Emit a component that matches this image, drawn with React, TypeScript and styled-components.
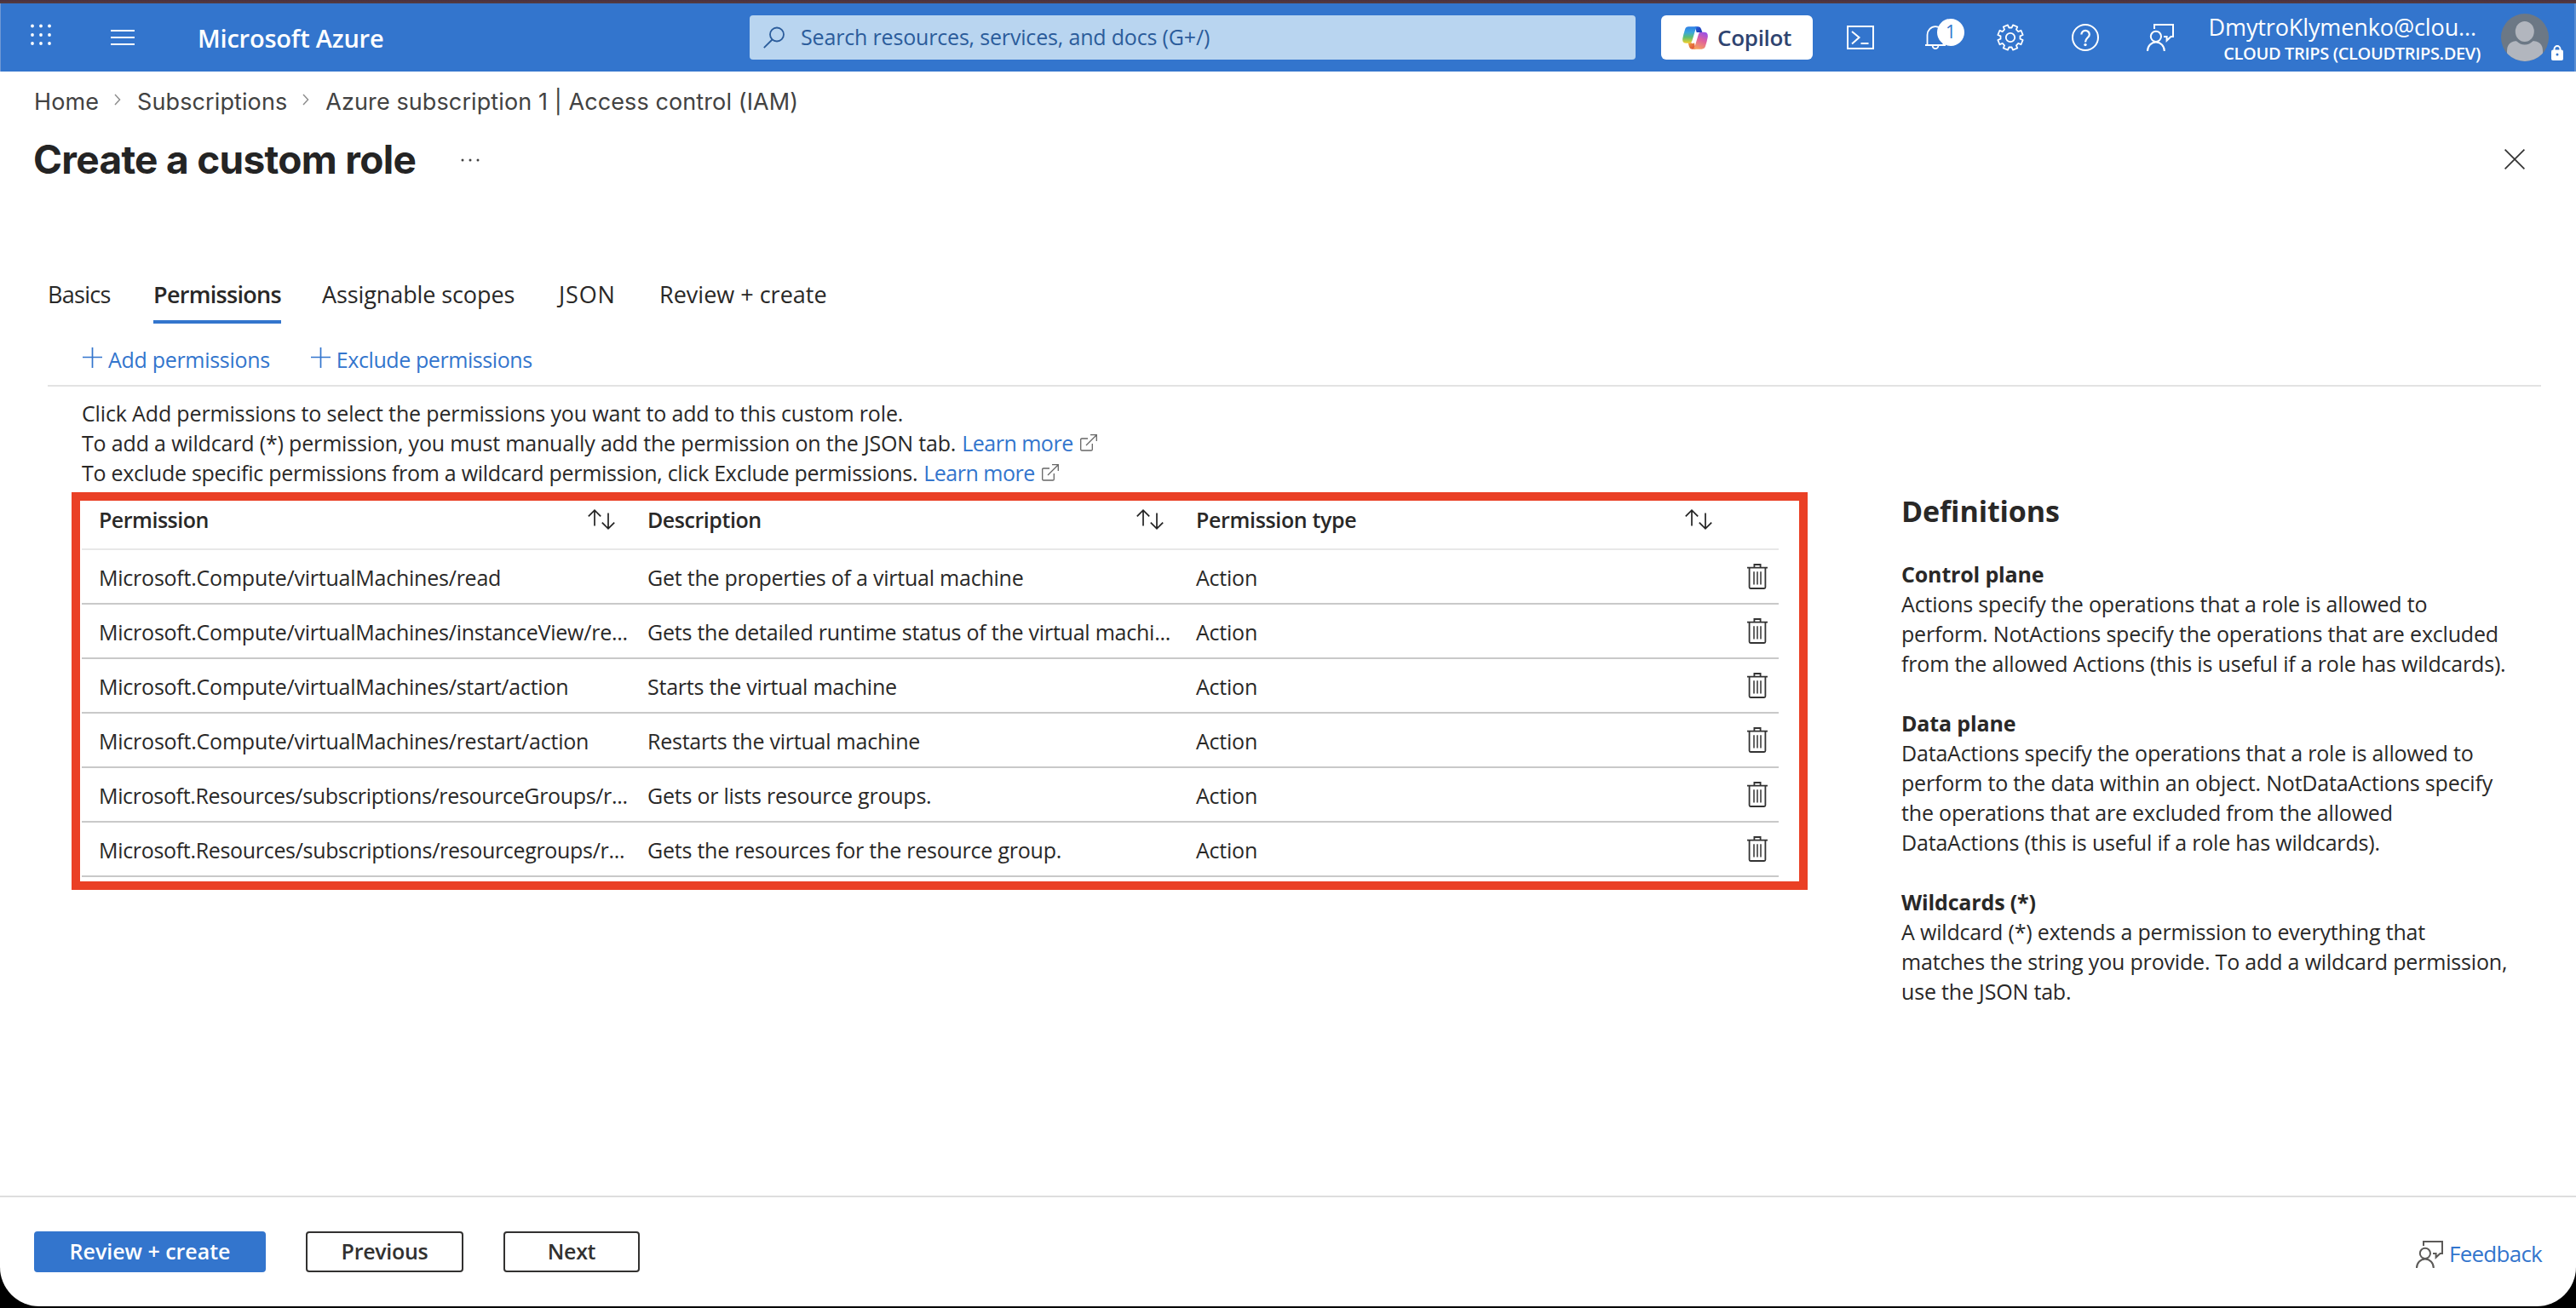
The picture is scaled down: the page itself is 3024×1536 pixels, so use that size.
import React from "react";
import styled, { createGlobalStyle } from "styled-components";

const colors = {
  brand: "#3375cd",
  text: "#292827",
  link: "#3375cd",
  highlight: "#ea4025",
};

const GlobalStyle = createGlobalStyle`
  * { box-sizing: border-box; }
  html, body { margin: 0; padding: 0; background: #000; }
  body {
    font-family: "Open Sans", "Noto Sans", sans-serif;
    font-size: 25px;
    color: ${colors.text};
  }
  svg { display: block; flex: none; }
  button { font-family: inherit; margin: 0; }
`;

const Window = styled.div`
  width: 3024px;
  height: 1534px;
  display: flex;
  flex-direction: column;
  background: #fff;
  border-radius: 0 0 46px 46px;
  overflow: hidden;
`;

/* ---------- top bar ---------- */

const Strip = styled.div`
  height: 4px;
  flex: none;
  background: linear-gradient(#4a3140, #553c41);
`;

const TopBar = styled.header`
  flex: none;
  height: 80px;
  display: grid;
  grid-template-columns: 880px 1040px 1fr;
  align-items: center;
  background: ${colors.brand};
  box-shadow: inset 2px 0 0 -1px #6f98d4, inset -2px 0 0 #5a8ed3;
  color: #fff;
`;

const BarStart = styled.div`
  display: flex;
  align-items: center;
  padding-left: 36px;
`;

const WaffleSlot = styled.div`
  width: 94px;
  padding-bottom: 6px;
`;

const MenuSlot = styled.div`
  width: 102px;
`;

const Brand = styled.div`
  font-size: 29px;
  font-weight: 600;
  letter-spacing: -0.2px;
  line-height: 40px;
  padding-top: 1px;
`;

const Search = styled.div`
  height: 52px;
  display: flex;
  align-items: center;
  gap: 19px;
  padding-left: 16px;
  border-radius: 4px;
  background: #b9d5f0;
  color: #2b5c9b;
`;

const SearchText = styled.span`
  line-height: 36px;
  letter-spacing: -0.17px;
  padding-bottom: 2px;
`;

const BarEnd = styled.div`
  display: flex;
  align-items: center;
  padding-left: 30px;
`;

const CopilotButton = styled.button`
  width: 178px;
  height: 52px;
  margin-right: 12px;
  display: flex;
  align-items: center;
  gap: 11px;
  padding: 0 0 0 25px;
  border: 0;
  border-radius: 6px;
  background: #fff;
  color: #2f4470;
  font-size: 26px;
  font-weight: 600;
  letter-spacing: -0.3px;
  line-height: 36px;
`;

const BarIcon = styled.div`
  position: relative;
  width: 88px;
  height: 80px;
  display: flex;
  align-items: center;
  justify-content: center;
`;

const Badge = styled.span`
  position: absolute;
  left: 46px;
  top: 18px;
  width: 32px;
  height: 32px;
  border-radius: 50%;
  background: #fff;
  color: ${colors.brand};
  font-size: 21px;
  line-height: 30px;
  text-align: center;
`;

const Account = styled.div`
  width: 332px;
  display: flex;
  flex-direction: column;
  align-items: flex-end;
  padding-top: 4px;
  white-space: nowrap;
`;

const AccountName = styled.div`
  font-size: 27px;
  line-height: 34px;
  letter-spacing: -0.12px;
  padding-right: 5px;
`;

const AccountDirectory = styled.div`
  font-size: 20px;
  font-weight: 600;
  line-height: 28px;
  letter-spacing: -0.34px;
`;

const AvatarSlot = styled.div`
  display: flex;
  align-items: center;
  gap: 3px;
  margin-left: 24px;
`;

const LockSlot = styled.div`
  padding-top: 36px;
`;

/* ---------- page heading ---------- */

const Crumbs = styled.nav`
  flex: none;
  display: flex;
  align-items: center;
  height: 36px;
  margin: 18px 0 0 40px;
  font-family: Inter, sans-serif;
  font-size: 27px;
  line-height: 36px;
  letter-spacing: 0.1px;
  color: #424242;
  white-space: nowrap;
`;

const CrumbSeparator = styled.span`
  padding: 0 19px 6px 18px;
`;

const TitleRow = styled.div`
  flex: none;
  display: flex;
  align-items: center;
  height: 60px;
  margin-top: 19px;
  padding: 0 60px 0 39px;
`;

const Title = styled.h1`
  margin: 0;
  font-family: Inter, sans-serif;
  font-size: 46px;
  font-weight: 700;
  letter-spacing: -0.7px;
  line-height: 60px;
  color: #242424;
`;

const MoreSlot = styled.div`
  flex: 1;
  padding: 2px 0 0 53px;
`;

/* ---------- tabs and commands ---------- */

const Tabs = styled.div`
  flex: none;
  display: flex;
  gap: 48px;
  margin: 111px 0 0 56px;
`;

const Tab = styled.div<{ $width: number; $spacing: number; $active?: boolean }>`
  width: ${(p) => p.$width}px;
  height: 52px;
  font-size: 27px;
  line-height: 36px;
  font-weight: ${(p) => (p.$active ? 600 : 400)};
  letter-spacing: ${(p) => p.$spacing}px;
  white-space: nowrap;
  border-bottom: 4px solid ${(p) => (p.$active ? colors.brand : "transparent")};
`;

const CommandBar = styled.div`
  flex: none;
  display: flex;
  gap: 48px;
  height: 74px;
  margin: 0 41px 0 56px;
  padding: 24px 0 0 41px;
  border-bottom: 2px solid #e3e3e3;
  color: ${colors.link};
`;

const Command = styled.div<{ $spacing: number }>`
  display: flex;
  gap: 7px;
  height: 36px;
  line-height: 36px;
  letter-spacing: ${(p) => p.$spacing}px;

  svg { margin-top: 4px; }
`;

/* ---------- content ---------- */

const Intro = styled.div`
  flex: none;
  margin: 14px 0 0 96px;
`;

const IntroLine = styled.div<{ $spacing: number }>`
  display: flex;
  height: 35px;
  line-height: 35px;
  letter-spacing: ${(p) => p.$spacing}px;
  white-space: nowrap;
`;

const LearnMore = styled.a`
  display: flex;
  gap: 8px;
  margin-left: 7px;
  color: ${colors.link};
  letter-spacing: -0.5px;

  svg { margin-top: 7px; }
`;

const Content = styled.main`
  flex: 1;
  min-height: 0;
  display: flex;
  align-items: flex-start;
  margin: 5px 0 0 84px;
`;

const Highlight = styled.section`
  width: 2038px;
  height: 467px;
  padding: 0 24px 0 2px;
  border: 10px solid ${colors.highlight};
`;

const rowColumns = "644px 644px 1fr";

const TableHead = styled.div`
  display: grid;
  grid-template-columns: ${rowColumns};
  height: 58px;
  padding: 0 0 0 20px;
  border-bottom: 2px solid #e8e8e8;
`;

const HeadCell = styled.div<{ $spacing: number }>`
  width: 644px;
  height: 43px;
  display: flex;
  align-items: center;
  justify-content: space-between;
  padding-right: 38px;
  font-weight: 600;
  letter-spacing: ${(p) => p.$spacing}px;
`;

const TableRow = styled.div`
  display: grid;
  grid-template-columns: ${rowColumns} auto;
  align-items: center;
  height: 64px;
  padding: 0 13px 0 20px;
  border-bottom: 2px solid #c9c9c9;
`;

const Cell = styled.div<{ $spacing?: number }>`
  padding-top: 1px;
  line-height: 36px;
  letter-spacing: ${(p) => p.$spacing ?? -0.23}px;
  white-space: nowrap;
`;

const Definitions = styled.aside`
  margin-left: 110px;
  white-space: nowrap;
`;

const DefinitionsTitle = styled.h2`
  margin: 0;
  font-size: 34px;
  font-weight: 700;
  letter-spacing: -0.1px;
  line-height: 44px;
`;

const Definition = styled.section`
  margin-top: 35px;
  line-height: 35px;
  letter-spacing: -0.18px;
`;

const DefinitionTerm = styled.h3`
  margin: 0;
  font-size: 25px;
  font-weight: 700;
  letter-spacing: -0.15px;
`;

/* ---------- footer ---------- */

const Footer = styled.footer`
  flex: none;
  display: flex;
  height: 130px;
  padding: 40px 40px 0;
  border-top: 2px solid #dedede;
`;

const FooterButton = styled.button<{ $width: number; $gap?: number; $primary?: boolean }>`
  width: ${(p) => p.$width}px;
  height: 48px;
  margin-right: ${(p) => p.$gap ?? 0}px;
  padding: 0 0 3px;
  border: 2px solid ${(p) => (p.$primary ? colors.brand : "#323130")};
  border-radius: 4px;
  background: ${(p) => (p.$primary ? colors.brand : "#fff")};
  color: ${(p) => (p.$primary ? "#fff" : "#323130")};
  font-size: 25px;
  font-weight: 600;
  letter-spacing: ${(p) => (p.$primary ? -0.02 : -0.3)}px;
  line-height: 36px;
`;

const Feedback = styled.a`
  display: flex;
  gap: 7px;
  height: 36px;
  margin: 8px 0 0 auto;
  color: ${colors.link};
  font-size: 26px;
  line-height: 36px;
  letter-spacing: -0.75px;

  svg { margin-top: 3px; color: #5c5a58; }
`;

/* ---------- icons ---------- */

const WaffleIcon = () => (
  <svg width="24" height="26" viewBox="0 0 24 26" fill="#fff">
    {[2, 12, 22].map((x) =>
      [2.5, 13, 23].map((y) => <circle key={`${x}-${y}`} cx={x} cy={y} r="1.9" />)
    )}
  </svg>
);

const MenuIcon = () => (
  <svg width="28" height="20" viewBox="0 0 28 20" fill="#fff">
    <rect y="1" width="28" height="2" />
    <rect y="9" width="28" height="2" />
    <rect y="17" width="28" height="2" />
  </svg>
);

const SearchIcon = () => (
  <svg width="25" height="26" viewBox="0 0 25 26" fill="none" stroke="#2b5c9b" strokeWidth="1.8">
    <circle cx="16" cy="9.5" r="8" />
    <path d="M10.5 15.5 L0.8 25.2" />
  </svg>
);

const CopilotIcon = () => (
  <svg width="30" height="27" viewBox="0 0 90 81">
    <defs>
      <linearGradient id="cpLeft" x1="0" y1="0" x2="0" y2="1">
        <stop offset="0" stopColor="#2f7fe6" />
        <stop offset="0.35" stopColor="#3aa6dc" />
        <stop offset="0.65" stopColor="#5fbf6e" />
        <stop offset="1" stopColor="#f3d02c" />
      </linearGradient>
      <linearGradient id="cpRight" x1="0.7" y1="0" x2="0.3" y2="1">
        <stop offset="0" stopColor="#9a52e6" />
        <stop offset="0.45" stopColor="#e0609c" />
        <stop offset="1" stopColor="#f7a45c" />
      </linearGradient>
      <linearGradient id="cpTip" x1="0" y1="0" x2="1" y2="1">
        <stop offset="0" stopColor="#2a62dc" />
        <stop offset="1" stopColor="#1a35ae" />
      </linearGradient>
      <linearGradient id="cpTail" x1="0" y1="0" x2="1" y2="1">
        <stop offset="0" stopColor="#f0a23c" />
        <stop offset="1" stopColor="#d9413c" />
      </linearGradient>
    </defs>
    <path d="M44 1 H56 Q64 1 66 9 L70 21 H50 Z" fill="url(#cpTip)" />
    <path d="M46 80 H34 Q26 80 24 72 L20 58 H42 Z" fill="url(#cpTail)" />
    <path d="M22 1 H56 Q49 2 46 11 L34 51 Q32 59 24 59 H14 Q-2 59 1 42 Q4 26 9 11 Q12 1 22 1 Z" fill="url(#cpLeft)" />
    <path d="M68 80 H34 Q41 79 44 70 L56 30 Q58 20 66 20 H76 Q92 20 89 39 Q86 55 81 70 Q78 80 68 80 Z" fill="url(#cpRight)" />
    <path d="M45 21 H56 Q52 24 51 29 L44 54 Q43 59 37 60 H31 Q36 57 37 52 Z" fill="#fff" />
  </svg>
);

const ShellIcon = () => (
  <svg width="32" height="28" viewBox="0 0 32 28" fill="none" stroke="#fff" strokeWidth="2">
    <rect x="1" y="1" width="30" height="26" />
    <path d="M6 7 L14.5 14 L6 21.5 M16.5 21 H25.5" />
  </svg>
);

const BellIcon = () => (
  <svg width="26" height="28" viewBox="0 0 26 28" fill="none" stroke="#fff" strokeWidth="1.8">
    <path d="M1 23 H25 M3.5 23 V11 A9.5 9.8 0 0 1 22.5 11 V23" />
    <path d="M9.6 23.5 A3.4 3.6 0 0 0 16.4 23.5" />
  </svg>
);

const gearPath = (() => {
  const points: string[] = [];
  for (let tooth = 0; tooth < 8; tooth += 1) {
    const mid = (tooth * Math.PI) / 4 + Math.PI / 8;
    const corners: [number, number][] = [
      [-0.25, 11.6],
      [-0.19, 15],
      [0.19, 15],
      [0.25, 11.6],
    ];
    corners.forEach(([offset, radius]) => {
      const x = 16 + radius * Math.cos(mid + offset);
      const y = 16 + radius * Math.sin(mid + offset);
      points.push(`${x.toFixed(2)} ${y.toFixed(2)}`);
    });
  }
  return `M${points.join(" L")} Z`;
})();

const GearIcon = () => (
  <svg width="32" height="32" viewBox="0 0 32 32" fill="none" stroke="#fff" strokeWidth="1.8" strokeLinejoin="round">
    <path d={gearPath} />
    <circle cx="16" cy="16" r="5.2" />
  </svg>
);

const HelpIcon = () => (
  <svg width="32" height="32" viewBox="0 0 32 32" fill="none" stroke="#fff" strokeWidth="2">
    <circle cx="16" cy="16" r="15" />
    <path d="M11.4 12.6 A4.7 4.7 0 0 1 20.8 12.4 C20.8 16.2 16 16.4 16 21.4" strokeWidth="2.2" />
    <circle cx="16" cy="24.6" r="1.7" fill="#fff" stroke="none" />
  </svg>
);

const PersonFeedbackIcon = () => (
  <svg width="32" height="32" viewBox="0 0 32 32" fill="none" stroke="currentColor" strokeWidth="2">
    <circle cx="10.9" cy="14.8" r="6.1" />
    <path d="M1 32 A9.9 10.6 0 0 1 20.8 32" />
    <path d="M9 6 V1 H31 V15 H28.5 L23.6 19.6 V15 H20" />
  </svg>
);

const AvatarIcon = () => (
  <svg width="56" height="56" viewBox="0 0 56 56">
    <defs>
      <clipPath id="avatarClip">
        <circle cx="28" cy="28" r="28" />
      </clipPath>
    </defs>
    <g clipPath="url(#avatarClip)">
      <rect width="56" height="56" fill="#6c7885" />
      <path d="M7 56 V44 Q7 32 20 32 H36 Q49 32 49 44 V56 Z" fill="#b2b6be" />
      <ellipse cx="27.8" cy="22" rx="13.5" ry="14.6" fill="#6c7885" />
      <ellipse cx="27.8" cy="21" rx="11" ry="12" fill="#b2b6be" />
    </g>
  </svg>
);

const LockIcon = () => (
  <svg width="14" height="18" viewBox="0 0 14 18">
    <path d="M3.5 7 V4.6 A3.5 3.5 0 0 1 10.5 4.6 V7" fill="none" stroke="#fff" strokeWidth="2" />
    <rect y="5.5" width="14" height="12.5" rx="2" fill="#fff" />
    <circle cx="7" cy="11" r="1.5" fill={colors.brand} />
  </svg>
);

const ChevronIcon = () => (
  <svg width="8" height="14" viewBox="0 0 8 14" fill="none" stroke="#8a8a8a" strokeWidth="1.4">
    <path d="M1 1 L6.6 7 L1 13" />
  </svg>
);

const MoreIcon = () => (
  <svg width="22" height="4" viewBox="0 0 22 4" fill="#424242">
    <circle cx="2" cy="2" r="1.5" />
    <circle cx="11" cy="2" r="1.5" />
    <circle cx="20" cy="2" r="1.5" />
  </svg>
);

const CloseIcon = () => (
  <svg width="24" height="24" viewBox="0 0 24 24" stroke="#333" strokeWidth="1.7">
    <path d="M0.6 0.6 L23.4 23.4 M23.4 0.6 L0.6 23.4" />
  </svg>
);

const PlusIcon = () => (
  <svg width="23" height="24" viewBox="0 0 23 24" stroke={colors.link} strokeWidth="1.7">
    <path d="M11.5 0 V24 M0 11.5 H23" />
  </svg>
);

const ExternalIcon = () => (
  <svg width="20" height="20" viewBox="0 0 20 20" fill="none" stroke="#666" strokeWidth="1.3">
    <path d="M9 5 H2 Q0.7 5 0.7 6.3 V17.7 Q0.7 19 2 19 H13 Q14.3 19 14.3 17.7 V11" />
    <path d="M12 0.7 H19.3 V8 M19.3 0.7 L7 13" />
  </svg>
);

const SortIcon = () => (
  <svg width="32" height="24" viewBox="0 0 32 24" fill="none" stroke="#222" strokeWidth="1.7">
    <path d="M8 19.5 V1.2 M0.8 8.4 L8 1.2 L15.2 8.4" />
    <path d="M24 4.5 V22.8 M16.8 15.6 L24 22.8 L31.2 15.6" />
  </svg>
);

const TrashIcon = () => (
  <svg width="24" height="30" viewBox="0 0 24 30" fill="none" stroke="#333" strokeWidth="1.8">
    <path d="M0 4.7 H24 M8.4 4.7 V1 H15.6 V4.7" />
    <path d="M2.6 4.7 V27.5 Q2.6 29 4 29 H20 Q21.4 29 21.4 27.5 V4.7" />
    <path d="M8 9.3 V24.5 M12 9.3 V24.5 M16 9.3 V24.5" strokeWidth="1.5" />
  </svg>
);

/* ---------- data ---------- */

const permissions = [
  { name: "Microsoft.Compute/virtualMachines/read", description: "Get the properties of a virtual machine" },
  { name: "Microsoft.Compute/virtualMachines/instanceView/re...", description: "Gets the detailed runtime status of the virtual machi..." },
  { name: "Microsoft.Compute/virtualMachines/start/action", description: "Starts the virtual machine" },
  { name: "Microsoft.Compute/virtualMachines/restart/action", description: "Restarts the virtual machine" },
  { name: "Microsoft.Resources/subscriptions/resourceGroups/r...", description: "Gets or lists resource groups.", spacing: -0.34 },
  { name: "Microsoft.Resources/subscriptions/resourcegroups/r...", description: "Gets the resources for the resource group.", spacing: -0.32 },
];

const definitions = [
  {
    term: "Control plane",
    lines: [
      "Actions specify the operations that a role is allowed to",
      "perform. NotActions specify the operations that are excluded",
      "from the allowed Actions (this is useful if a role has wildcards).",
    ],
  },
  {
    term: "Data plane",
    lines: [
      "DataActions specify the operations that a role is allowed to",
      "perform to the data within an object. NotDataActions specify",
      "the operations that are excluded from the allowed",
      "DataActions (this is useful if a role has wildcards).",
    ],
  },
  {
    term: "Wildcards (*)",
    lines: [
      "A wildcard (*) extends a permission to everything that",
      "matches the string you provide. To add a wildcard permission,",
      "use the JSON tab.",
    ],
  },
];

export default function App() {
  return (
    <>
      <GlobalStyle />
      <Window>
        <Strip />
        <TopBar>
          <BarStart>
            <WaffleSlot><WaffleIcon /></WaffleSlot>
            <MenuSlot><MenuIcon /></MenuSlot>
            <Brand>Microsoft Azure</Brand>
          </BarStart>
          <Search>
            <SearchIcon />
            <SearchText>Search resources, services, and docs (G+/)</SearchText>
          </Search>
          <BarEnd>
            <CopilotButton><CopilotIcon />Copilot</CopilotButton>
            <BarIcon><ShellIcon /></BarIcon>
            <BarIcon><BellIcon /><Badge>1</Badge></BarIcon>
            <BarIcon><GearIcon /></BarIcon>
            <BarIcon><HelpIcon /></BarIcon>
            <BarIcon><PersonFeedbackIcon /></BarIcon>
            <Account>
              <AccountName>DmytroKlymenko@clou...</AccountName>
              <AccountDirectory>CLOUD TRIPS (CLOUDTRIPS.DEV)</AccountDirectory>
            </Account>
            <AvatarSlot>
              <AvatarIcon />
              <LockSlot><LockIcon /></LockSlot>
            </AvatarSlot>
          </BarEnd>
        </TopBar>

        <Crumbs>
          <span>Home</span>
          <CrumbSeparator><ChevronIcon /></CrumbSeparator>
          <span>Subscriptions</span>
          <CrumbSeparator><ChevronIcon /></CrumbSeparator>
          <span>Azure subscription 1 | Access control (IAM)</span>
        </Crumbs>

        <TitleRow>
          <Title>Create a custom role</Title>
          <MoreSlot><MoreIcon /></MoreSlot>
          <CloseIcon />
        </TitleRow>

        <Tabs>
          <Tab $width={76} $spacing={-0.7}>Basics</Tab>
          <Tab $width={150} $spacing={-0.7} $active>Permissions</Tab>
          <Tab $width={230} $spacing={-0.1}>Assignable scopes</Tab>
          <Tab $width={70} $spacing={0.8}>JSON</Tab>
          <Tab $width={198} $spacing={0}>Review + create</Tab>
        </Tabs>

        <CommandBar>
          <Command $spacing={-0.3}><PlusIcon />Add permissions</Command>
          <Command $spacing={-0.42}><PlusIcon />Exclude permissions</Command>
        </CommandBar>

        <Intro>
          <IntroLine $spacing={-0.15}>
            Click Add permissions to select the permissions you want to add to this custom role.
          </IntroLine>
          <IntroLine $spacing={-0.17}>
            To add a wildcard (*) permission, you must manually add the permission on the JSON tab.
            <LearnMore>Learn more<ExternalIcon /></LearnMore>
          </IntroLine>
          <IntroLine $spacing={-0.27}>
            To exclude specific permissions from a wildcard permission, click Exclude permissions.
            <LearnMore>Learn more<ExternalIcon /></LearnMore>
          </IntroLine>
        </Intro>

        <Content>
          <Highlight>
            <TableHead>
              <HeadCell $spacing={-0.5}>Permission<SortIcon /></HeadCell>
              <HeadCell $spacing={-0.45}>Description<SortIcon /></HeadCell>
              <HeadCell $spacing={-0.35}>Permission type<SortIcon /></HeadCell>
            </TableHead>
            {permissions.map((permission) => (
              <TableRow key={permission.name}>
                <Cell $spacing={permission.spacing}>{permission.name}</Cell>
                <Cell>{permission.description}</Cell>
                <Cell>Action</Cell>
                <TrashIcon />
              </TableRow>
            ))}
          </Highlight>
          <Definitions>
            <DefinitionsTitle>Definitions</DefinitionsTitle>
            {definitions.map((definition) => (
              <Definition key={definition.term}>
                <DefinitionTerm>{definition.term}</DefinitionTerm>
                {definition.lines.map((line) => (
                  <div key={line}>{line}</div>
                ))}
              </Definition>
            ))}
          </Definitions>
        </Content>

        <Footer>
          <FooterButton $width={272} $gap={47} $primary>Review + create</FooterButton>
          <FooterButton $width={185} $gap={47}>Previous</FooterButton>
          <FooterButton $width={160}>Next</FooterButton>
          <Feedback><PersonFeedbackIcon />Feedback</Feedback>
        </Footer>
      </Window>
    </>
  );
}
